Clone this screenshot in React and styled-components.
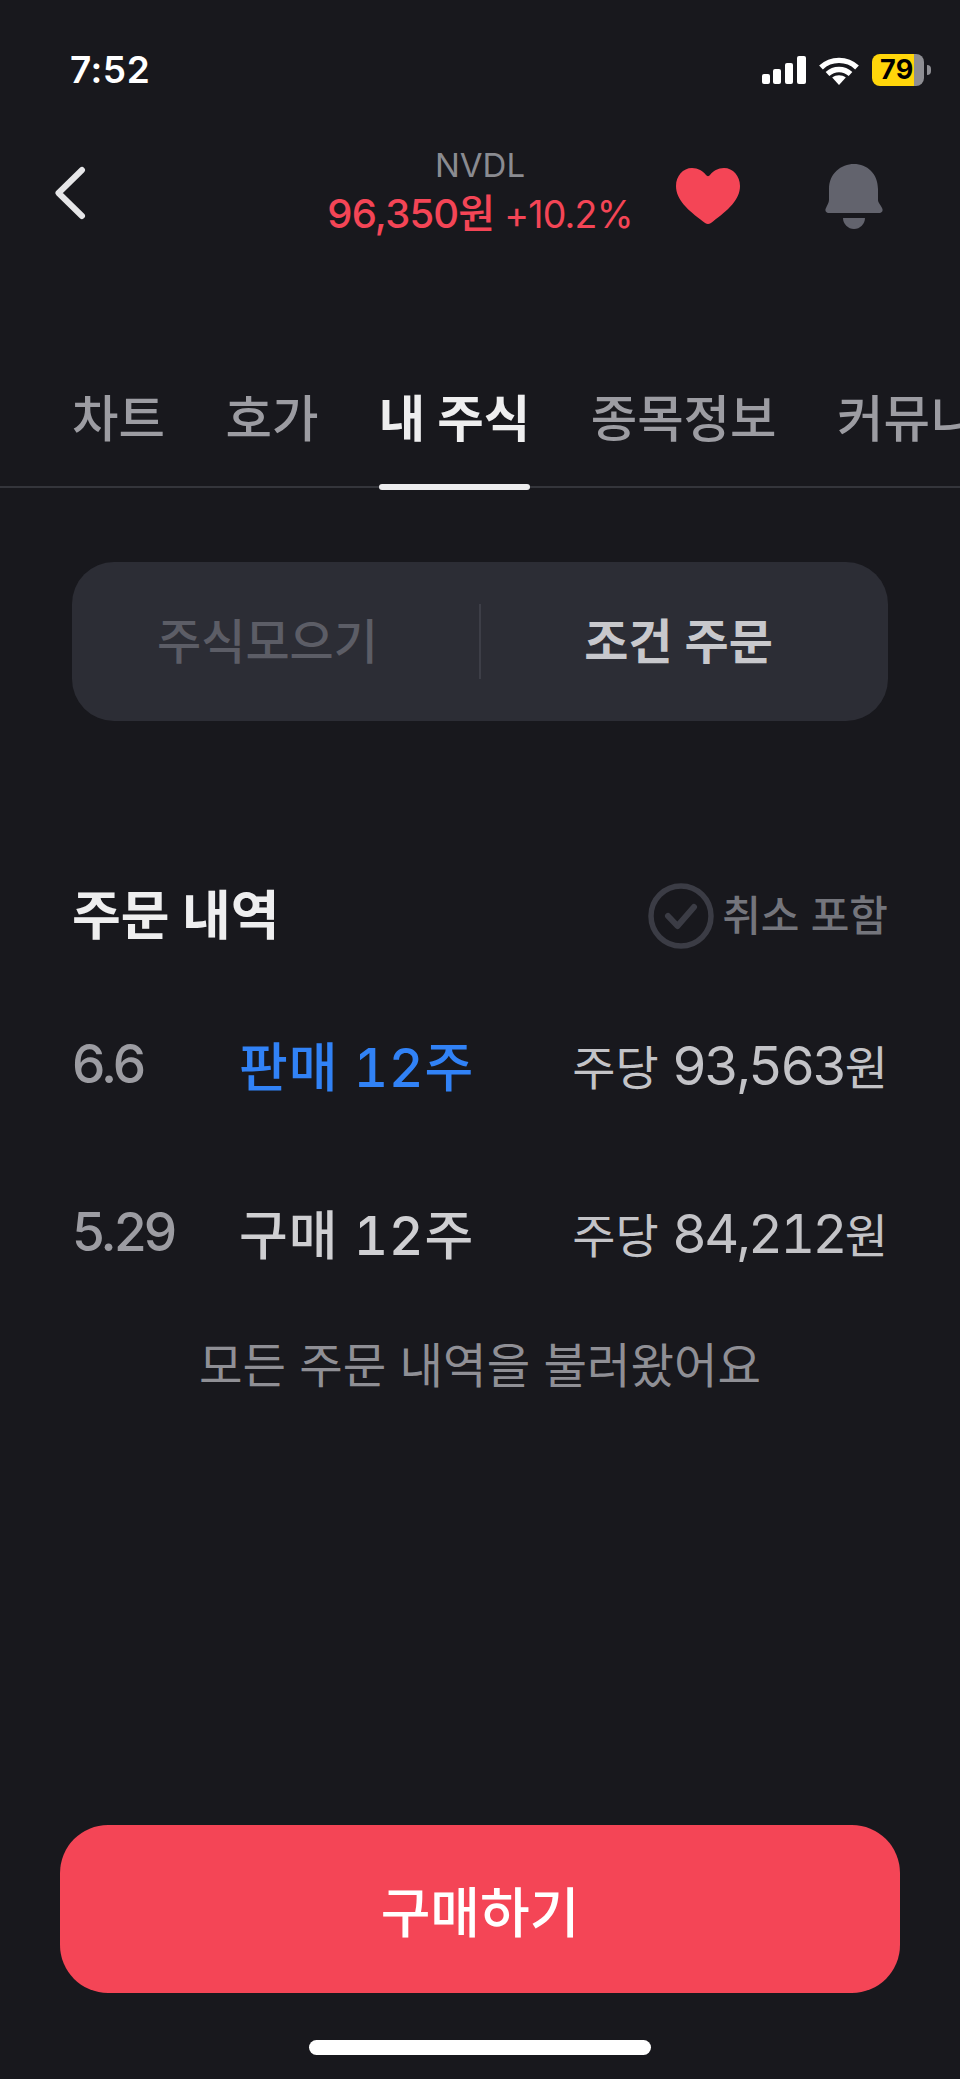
import React from "react";
import styled, { createGlobalStyle } from "styled-components";

const Global = createGlobalStyle`
  html, body { margin: 0; padding: 0; background: #18181d; }
  * { box-sizing: border-box; }
`;
const FONT = `Inter, "Noto Sans CJK KR", "Noto Sans", sans-serif`;

const Page = styled.div`
  width: 960px; height: 2079px; background: #18181d; font-family: ${FONT};
  display: flex; flex-direction: column; overflow: hidden; color: #e8e8ea;
`;
const StatusBar = styled.div`
  height: 100px; padding: 50px 36px 0 70px; display: flex; justify-content: space-between; align-items: flex-start; flex: none;
`;
const Time = styled.div`
  font-size: 37px; line-height: 40px; font-weight: 600; color: #fff; letter-spacing: 0.5px;
`;
const StatusIcons = styled.div`
  display: flex; align-items: center; gap: 13px; margin-top: 4px; height: 32px;
`;
const Battery = styled.div`
  width: 52px; height: 32px; border-radius: 8px; color: #000; font-size: 27px; font-weight: 700; line-height: 32px;
  padding-left: 8px; letter-spacing: 0.2px; position: relative;
  background: linear-gradient(90deg, #ffd60a 0 42px, #8e8e93 42px);
  &::after { content: ""; position: absolute; left: 55px; top: 11px; width: 4px; height: 10px; background: #8e8e93; border-radius: 0 4px 4px 0; }
`;
const Header = styled.div`
  height: 186px; display: grid; grid-template-columns: 1fr auto 1fr; align-items: center; padding: 0 55px; flex: none;
`;
const BackButton = styled.div`display: flex; align-items: center;`;
const TitleBlock = styled.div`
  display: flex; flex-direction: column; align-items: center; gap: 5px;
`;
const Ticker = styled.div`
  font-size: 33px; line-height: 38px; color: #8a8b91; font-weight: 400;
`;
const Price = styled.div`
  font-size: 40px; line-height: 50px; color: #f44556; font-weight: 500; white-space: nowrap; letter-spacing: -0.8px;
  span { font-weight: 400; font-size: 37.5px; }
`;
const HeaderActions = styled.div`
  display: flex; justify-content: flex-end; align-items: center; gap: 85px; margin: 6px 22px 0 0;
`;
const Tabs = styled.div`
  height: 204px; display: flex; gap: 60.5px; padding: 0 0 0 72px; white-space: nowrap; overflow: hidden; flex: none; position: relative;
  &::before { content: ""; position: absolute; left: 0; right: 0; bottom: 2px; height: 2px; background: #34353b; }
`;
const Tab = styled.div`
  font-size: 50.5px; line-height: 60px; padding-top: 103px; height: 100%; position: relative; flex: none;
  color: ${p => (p.$active ? "#eeeeef" : "#9c9ca2")};
  font-weight: ${p => (p.$active ? 700 : 500)};
  ${p => p.$active && `&::after { content: ""; position: absolute; left: 0; right: 0; bottom: 0; height: 6px; background: #ececee; border-radius: 3px; }`}
`;
const Segment = styled.div`
  margin: 72px 72px 0; height: 159px; border-radius: 42px; background: #2c2d35; display: grid; grid-template-columns: 1fr 2px 1fr; align-items: center; flex: none;
`;
const SegmentItem = styled.div`
  text-align: center; font-size: 48px; line-height: 60px; font-weight: ${p => (p.$active ? 600 : 500)};
  color: ${p => (p.$active ? "#c8c8cc" : "#5c5d66")};
  padding-right: ${p => (p.$active ? 12 : 16)}px;
`;
const SegmentDivider = styled.div`height: 75px; background: #3d3e47;`;
const SectionHead = styled.div`
  margin: 160px 72px 0; display: flex; justify-content: space-between; align-items: center; height: 70px; flex: none;
`;
const SectionTitle = styled.div`font-size: 53px; font-weight: 700; line-height: 60px; color: #eeeeef;`;
const Toggle = styled.div`
  display: flex; align-items: center; gap: 8px; font-size: 42px; font-weight: 500; color: #74757c;
`;
const ToggleLabel = styled.span`margin-bottom: 8px;`;
const OrderList = styled.div`
  margin: 75px 72px 0; display: flex; flex-direction: column; gap: 108px; flex: none;
`;
const OrderRow = styled.div`
  display: grid; grid-template-columns: 167px 1fr auto; align-items: center; height: 60px;
`;
const OrderDate = styled.div`font-size: 53px; font-weight: 500; color: #9c9ca2; letter-spacing: -2.8px;`;
const OrderKind = styled.div`
  font-size: 53px; font-weight: 500; color: ${p => (p.$sell ? "#3182f6" : "#cfcfd2")}; white-space: nowrap;
  font-feature-settings: "tnum"; letter-spacing: 1px;
`;
const OrderPrice = styled.div`font-size: 47px; font-weight: 400; color: #c3c3c7; white-space: nowrap;`;
const Amount = styled.span`font-size: 54px; letter-spacing: -2.8px; font-feature-settings: "tnum";`;
const AllLoaded = styled.div`
  margin-top: 82px; text-align: center; font-size: 47.300px; line-height: 60px; color: #8f8f95; font-weight: 400; flex: none;
`;
const Footer = styled.div`
  margin-top: auto; padding: 0 60px 24px; display: flex; flex-direction: column; align-items: center; flex: none;
`;
const BuyButton = styled.div`
  width: 100%; height: 168px; border-radius: 48px; background: #f44556; color: #fff; font-size: 54px; font-weight: 500;
  display: flex; align-items: center; justify-content: center;
`;
const HomeBar = styled.div`
  margin-top: 47px; width: 342px; height: 15px; border-radius: 8px; background: #fff;
`;

const Signal = () => (
  <svg width="44" height="28" viewBox="0 0 44 28" fill="#fff">
    <rect x="0" y="18" width="8" height="10" rx="2" />
    <rect x="11" y="13" width="8" height="15" rx="2" />
    <rect x="23" y="7" width="8" height="21" rx="2" />
    <rect x="35" y="0" width="9" height="28" rx="2" />
  </svg>
);
const Wifi = () => (
  <svg width="40" height="29" viewBox="0 0 40 29" fill="none" stroke="#fff" strokeWidth="5.4">
    <path d="M2 11.5C12 2 28 2 38 11.5" />
    <path d="M8.5 18C15 12 25 12 31.5 18" />
    <path d="M20 29l-6.8-7.4c4-3 9.6-3 13.6 0z" fill="#fff" stroke="none" />
  </svg>
);
const Chevron = () => (
  <svg width="32" height="54" viewBox="0 0 32 54" fill="none" stroke="#e6e6e8" strokeWidth="6" strokeLinecap="round" strokeLinejoin="round">
    <path d="M27 4L3.500 27L27 50" />
  </svg>
);
const Heart = () => (
  <svg width="64" height="56" viewBox="0 0 64 56" fill="#f44556">
    <path d="M32 56C30 56 29 55 27 53.500C12 42 0 32 0 18C0 8 7 0 16 0C22 0 27 3 30 7C31 8.500 33 8.500 34 7C37 3 42 0 48 0C57 0 64 8 64 18C64 32 52 42 37 53.500C35 55 34 56 32 56z" />
  </svg>
);
const Bell = () => (
  <svg width="58" height="65" viewBox="0 0 58 65" fill="#62636d">
    <path d="M29 0C16 0 4 9.500 4 25V36C4 39 2 41 1 44C-.5 46.500 1 49 3.500 49H54.500C57 49 58.500 46.500 57 44C56 41 53 39 53 36V25C53 9.500 42 0 29 0z" />
    <path d="M18 54H40C40 60 35 65 29 65C23 65 18 60 18 54z" />
  </svg>
);
const CheckCircle = () => (
  <svg width="66" height="66" viewBox="0 0 66 66" fill="none" stroke="#3b3c45">
    <circle cx="33" cy="33" r="30" strokeWidth="5.500" />
    <path d="M20 33l9.500 10L46 24" strokeWidth="6" strokeLinecap="round" strokeLinejoin="round" />
  </svg>
);

const tabs = ["차트", "호가", "내 주식", "종목정보", "커뮤니티"];

export default function App() {
  return (
    <Page>
      <Global />
      <StatusBar>
        <Time>7:52</Time>
        <StatusIcons>
          <Signal />
          <Wifi />
          <Battery>79</Battery>
        </StatusIcons>
      </StatusBar>
      <Header>
        <BackButton><Chevron /></BackButton>
        <TitleBlock>
          <Ticker>NVDL</Ticker>
          <Price>96,350원 <span>+10.2%</span></Price>
        </TitleBlock>
        <HeaderActions>
          <Heart />
          <Bell />
        </HeaderActions>
      </Header>
      <Tabs>
        {tabs.map(t => <Tab key={t} $active={t === "내 주식"}>{t}</Tab>)}
      </Tabs>
      <Segment>
        <SegmentItem>주식모으기</SegmentItem>
        <SegmentDivider />
        <SegmentItem $active>조건 주문</SegmentItem>
      </Segment>
      <SectionHead>
        <SectionTitle>주문 내역</SectionTitle>
        <Toggle><CheckCircle /><ToggleLabel>취소 포함</ToggleLabel></Toggle>
      </SectionHead>
      <OrderList>
        <OrderRow>
          <OrderDate>6.6</OrderDate>
          <OrderKind $sell>판매 12주</OrderKind>
          <OrderPrice>주당 <Amount>93,563</Amount>원</OrderPrice>
        </OrderRow>
        <OrderRow>
          <OrderDate>5.29</OrderDate>
          <OrderKind>구매 12주</OrderKind>
          <OrderPrice>주당 <Amount>84,212</Amount>원</OrderPrice>
        </OrderRow>
      </OrderList>
      <AllLoaded>모든 주문 내역을 불러왔어요</AllLoaded>
      <Footer>
        <BuyButton>구매하기</BuyButton>
        <HomeBar />
      </Footer>
    </Page>
  );
}
